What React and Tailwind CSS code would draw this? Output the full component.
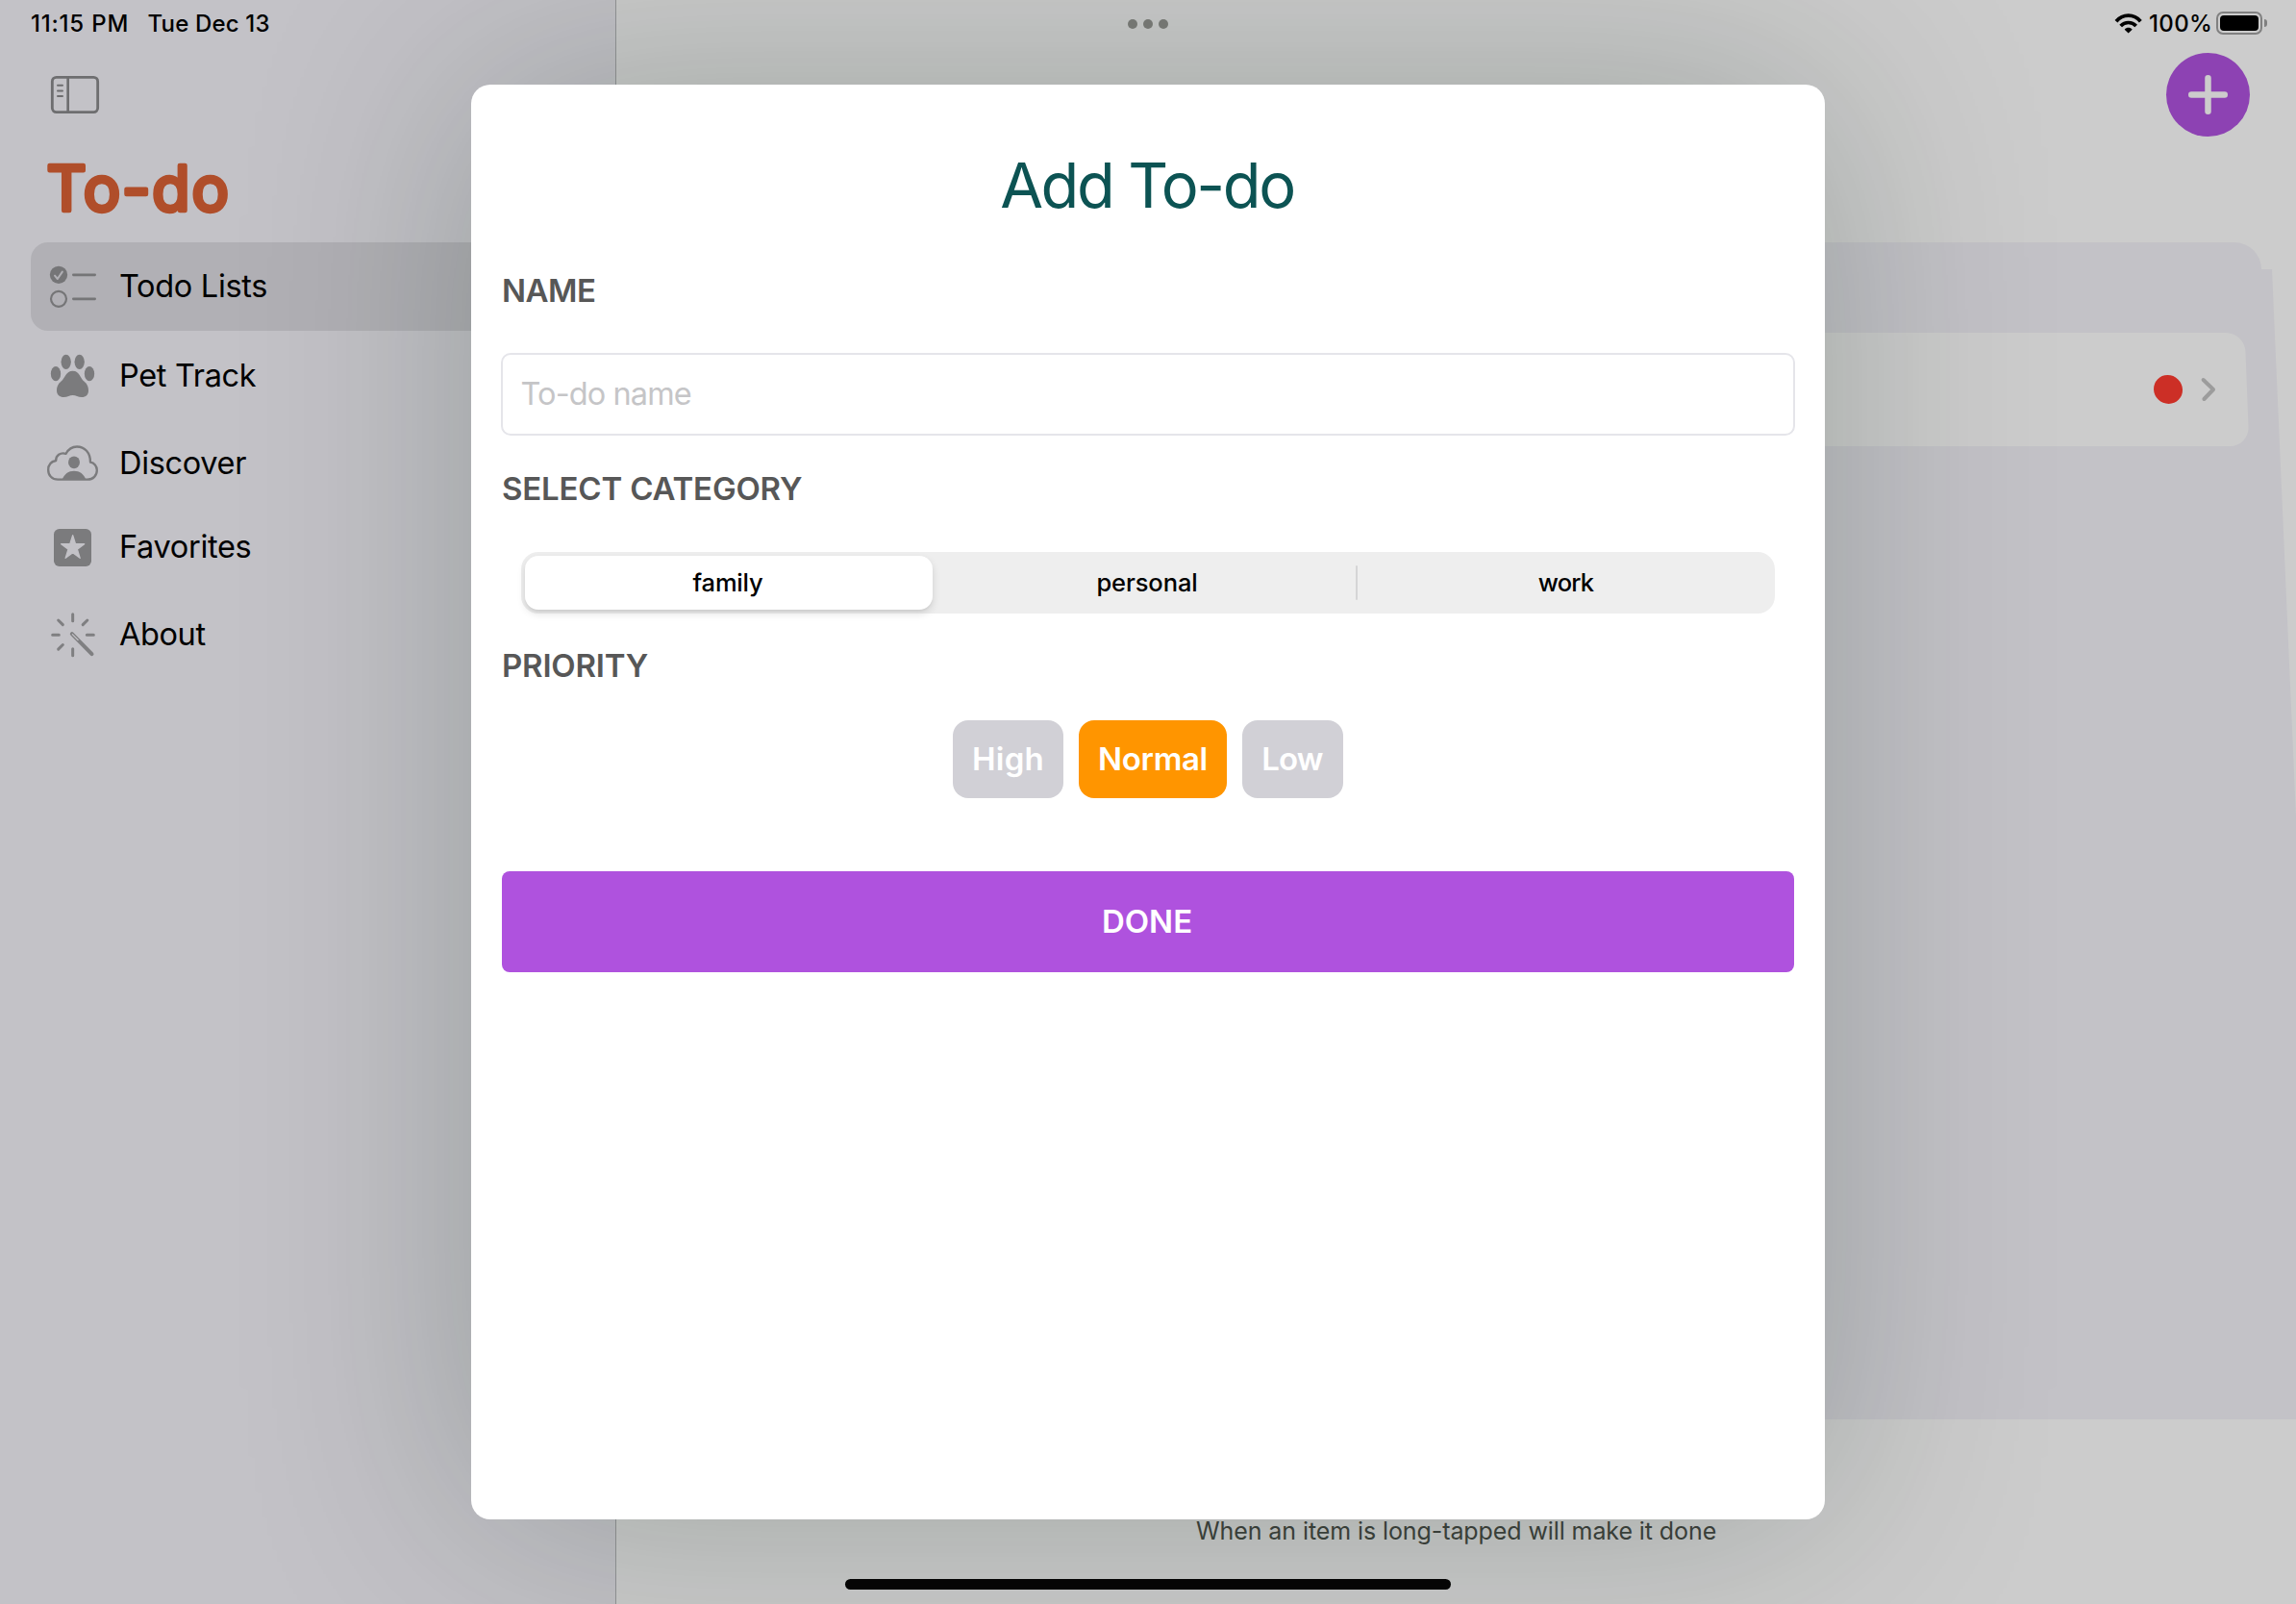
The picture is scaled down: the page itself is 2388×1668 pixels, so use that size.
function SidebarToggleIcon() {
  return (
    <svg viewBox="150 225 170 140" className="h-[46.67px] w-[56.67px]" fill="none" stroke="#6e6e70" strokeLinecap="round">
      <rect x="163" y="241" width="142" height="109" rx="13" strokeWidth="8.500" />
      <path d="M212 241V350" strokeWidth="8" />
      <path d="M180 266.500H195M180 283.500H195M180 300H195" strokeWidth="6" />
    </svg>
  );
}

const iconClass = "size-[60px] shrink-0";

function ChecklistIcon() {
  return (
    <svg viewBox="135 804 180 180" className={iconClass} fill="none" strokeLinecap="round" strokeLinejoin="round">
      <circle cx="183" cy="857.500" r="27.500" fill="#757577" />
      <path d="M171 860L179.500 870L194.500 848" stroke="#b1b0b5" strokeWidth="6" />
      <circle cx="183" cy="932.500" r="24" stroke="#757577" strokeWidth="6.500" />
      <path d="M229 857.500H296M229 932.500H296" stroke="#757577" strokeWidth="8" />
    </svg>
  );
}

function PawIcon() {
  return (
    <svg viewBox="135 63 180 180" className={iconClass} fill="#7b7b7d">
      <ellipse cx="206" cy="109" rx="15.500" ry="23" />
      <ellipse cx="248" cy="109" rx="15.500" ry="23" />
      <ellipse cx="174" cy="146" rx="15.500" ry="23" />
      <ellipse cx="279" cy="146" rx="15.500" ry="23" />
      <path d="M227 137C205 137 205 158 190 170C180 178 177 188 177 198C177 212 186 219 199 219C211 219 217 213 227 213C237 213 243 219 255 219C268 219 276 212 276 198C276 188 273 178 263 170C248 158 249 137 227 137Z" />
    </svg>
  );
}

function CloudPersonIcon() {
  return (
    <svg viewBox="135 336 180 180" className={iconClass} fill="#7b7b7d">
      <path
        d="M181 476C162 476 150.500 463 150.500 446C150.500 431 160 420 174.500 417C174 401 188 390 206 395.500C213 382 225 373.500 240 373.500C264 373.500 282 392 282 422C294 424 302.500 435 302.500 447C302.500 463 291 476 273 476Z"
        fill="none"
        stroke="#7b7b7d"
        strokeWidth="7"
        strokeLinejoin="round"
      />
      <ellipse cx="231" cy="422.500" rx="18" ry="19" />
      <path d="M194 477C200 459 214 449.500 231 449.500S262 459 268 477Z" />
    </svg>
  );
}

function StarSquareIcon() {
  return (
    <svg viewBox="135 597 180 180" className={iconClass}>
      <rect x="168" y="630" width="117" height="117" rx="17" fill="#7b7b7d" />
      <path
        d="M227 650L235.500 677H263L241 693.500L249.500 721L227 704.500L204.500 721L213 693.500L191 677H218.500Z"
        fill="#c3c2c7"
        stroke="#c3c2c7"
        strokeWidth="4"
        strokeLinejoin="round"
      />
    </svg>
  );
}

function WandRaysIcon() {
  return (
    <svg viewBox="135 870 180 180" className={iconClass} fill="none" stroke="#7f7f81" strokeLinecap="round">
      <path
        d="M227 896V917M227 1004V1025M164 960.500H184M271 960.500H292M182 915L196 929M272.500 915L258.500 929M196 991.500L182 1005.500"
        strokeWidth="9"
      />
      <path d="M224.500 957.500L286.500 1020.500" strokeWidth="12" />
      <path d="M226 959L243.500 976.500" stroke="#c3c2c7" strokeWidth="3.500" />
    </svg>
  );
}

function WifiIcon() {
  return (
    <svg viewBox="955 38 90 66" className="h-[22px] w-[30px]" fill="none" stroke="#000">
      <path d="M961 65.500C982 41.500 1016 41.500 1037 65.500" strokeWidth="11.500" />
      <path d="M975 80C988 66 1010 66 1023 80" strokeWidth="11" />
      <path d="M987 91C993 83.500 1005 83.500 1011 91L999 102.500Z" fill="#000" stroke="none" />
    </svg>
  );
}

const navItems = [
  { label: "Todo Lists", icon: ChecklistIcon, row: "h-[92px] rounded-l-[18px] bg-[#b1b0b5]", text: "tracking-[-0.32px]" },
  { label: "Pet Track", icon: PawIcon, row: "h-[94px]", text: "tracking-[-0.34px]" },
  { label: "Discover", icon: CloudPersonIcon, row: "h-[88px]", text: "tracking-[-0.32px]" },
  { label: "Favorites", icon: StarSquareIcon, row: "h-[86px]", text: "tracking-[-0.32px]" },
  { label: "About", icon: WandRaysIcon, row: "h-[96px]", text: "tracking-[-0.4px]" },
];

function Sidebar() {
  return (
    <aside className="h-full w-[641px] shrink-0 border-r border-[#949597] bg-[#c3c2c7] pl-8 pt-[75px]">
      <div className="ml-[18px] h-[47px]">
        <SidebarToggleIcon />
      </div>
      <h1 className="mt-[34px] h-[96px]">
        <svg viewBox="0 0 260 80" className="h-[80px] w-[260px]" role="img" aria-label="To-do">
          <text
            x="16.500"
            y="62.500"
            fill="#b04e2a"
            stroke="#b04e2a"
            strokeWidth="4.500"
            strokeLinejoin="round"
            className="font-[Inter] text-[64px] font-normal tracking-[1.9px]"
          >
            To-do
          </text>
        </svg>
      </h1>
      <nav>
        {navItems.map(({ label, icon: Icon, row, text }) => (
          <div key={label} className={`flex items-center pl-[13px] ${row}`}>
            <Icon />
            <span className={`pl-[19px] text-[32.5px] leading-10 text-black ${text}`}>{label}</span>
          </div>
        ))}
      </nav>
    </aside>
  );
}

function MainPane() {
  return (
    <section className="flex h-full min-w-0 flex-1 flex-col bg-[#cccccc] pt-[55px]">
      <button className="mr-12 flex size-[87px] items-center justify-center self-end rounded-full bg-[#8d42b3]">
        <svg viewBox="0 0 41 41" className="size-[41px]" stroke="#cccccc" strokeWidth="6.500" strokeLinecap="round">
          <path d="M20.500 3.250V37.750M3.250 20.500H37.750" />
        </svg>
      </button>
      <div className="mr-9 mt-[110px] h-7 shrink-0 rounded-tr-[28px] bg-[#c3c2c7]" />
      <div className="h-[1196px] shrink-0 bg-[#c3c2c7] pt-[66px] [clip-path:polygon(0_0,1722px_0,100%_570px,100%_100%,0_100%)]">
        <div className="ml-[50px] mr-[51.5px] flex h-[117.5px] skew-x-[2.2deg] items-center justify-end rounded-[20px] bg-[#cccccc] pr-[32px]">
          <span className="size-[29.5px] rounded-full bg-[#cc2f26]" />
          <svg viewBox="0 0 16 26" className="ml-[19px] h-[26px] w-4" fill="none" stroke="#9c9c9c" strokeWidth="4" strokeLinecap="round" strokeLinejoin="round">
            <path d="M3 3L13 13L3 23" />
          </svg>
        </div>
      </div>
      <p className="ml-[603px] mt-[96px] whitespace-nowrap text-[25px] leading-10 tracking-[-0.09px] text-[#3f433e]">
        When an item is long-tapped will make it done
      </p>
    </section>
  );
}

function StatusBar() {
  return (
    <header className="absolute inset-x-0 top-0 grid h-12 grid-cols-3 items-center text-[24px] font-medium leading-[47px] text-black">
      <div className="flex pl-8">
        <span className="w-[121.5px] tracking-[0.8px]">11:15 PM</span>
        <span className="tracking-[0.17px]">Tue Dec 13</span>
      </div>
      <div className="flex justify-center gap-1.5 pt-0.5">
        <i className="size-2.5 rounded-full bg-[#747672]" />
        <i className="size-2.5 rounded-full bg-[#747672]" />
        <i className="size-2.5 rounded-full bg-[#747672]" />
      </div>
      <div className="flex items-center justify-end pr-[30px]">
        <WifiIcon />
        <span className="ml-[6px] w-[70px] tracking-[0.35px]">100%</span>
        <span className="flex h-6 w-12 items-center justify-center rounded-[7px] border-2 border-[#808080]">
          <span className="h-4 w-10 rounded-[4px] bg-black" />
        </span>
        <span className="ml-0.5 h-2 w-[3px] rounded-r-full bg-[#808080]" />
      </div>
    </header>
  );
}

const labelClass = "text-[33px] font-semibold leading-10 text-[#575757]";

function AddTodoDialog() {
  return (
    <div
      role="dialog"
      className="absolute left-[490px] top-[88px] h-[1492px] w-[1408px] rounded-[20px] bg-white px-8 pt-[65px] shadow-[0_0_240px_0_rgba(10,32,16,0.23)]"
    >
      <h2 className="h-20 pr-0.5 text-center text-[65px] leading-20 tracking-[-2.4px] text-[#0c5353]">Add To-do</h2>

      <div className={`mt-[49px] tracking-[-0.5px] ${labelClass}`}>NAME</div>
      <div className="-ml-px mt-[45px] flex h-[86px] w-[1346px] items-center rounded-[10px] border-2 border-[#e5e5ea] pl-[18.5px]">
        <span className="text-[32.5px] leading-10 tracking-[-0.9px] text-[#c5c5c7]">To-do name</span>
      </div>

      <div className={`mt-[35px] tracking-[-0.18px] ${labelClass}`}>SELECT CATEGORY</div>
      <div className="ml-5 mt-[46px] flex h-16 w-[1304px] items-center rounded-[18px] bg-[#eeeeee] p-1 text-center text-[25.5px] font-medium leading-14 text-black">
        <div className="h-14 w-[424px] rounded-[14px] bg-white pr-0.5 tracking-[-0.2px] shadow-[0_4px_8px_rgba(0,0,0,0.12),0_2px_2px_rgba(0,0,0,0.04)]">
          family
        </div>
        <div className="h-14 flex-1 pl-1.5 tracking-[-0.1px]">personal</div>
        <div className="h-9 w-0.5 rounded-full bg-[#d5d5d6]" />
        <div className="h-14 w-[430px] pl-[3px] tracking-[-0.8px]">work</div>
      </div>

      <div className={`mt-[34px] tracking-[-0.2px] ${labelClass}`}>PRIORITY</div>
      <div className="mt-[37px] flex justify-center gap-4 text-center text-[33px] font-semibold leading-[80px] text-white">
        <span className="h-[81px] w-[115px] rounded-2xl bg-[#d1d0d6] tracking-[0.2px]">High</span>
        <span className="h-[81px] w-[154px] rounded-2xl bg-[#ff9500] tracking-[-0.35px]">Normal</span>
        <span className="h-[81px] w-[105px] rounded-2xl bg-[#d1d0d6] pr-px tracking-[-0.88px]">Low</span>
      </div>

      <button className="mt-[76px] block h-[105px] w-[1344px] rounded-[8px] bg-[#af52de] pr-0.5 text-center text-[33px] font-semibold leading-[103px] text-white">
        DONE
      </button>
    </div>
  );
}

export default function App() {
  return (
    <main className="relative flex h-[1668px] w-[2388px] overflow-hidden font-[Inter,sans-serif]">
      <Sidebar />
      <MainPane />
      <AddTodoDialog />
      <StatusBar />
      <div className="absolute bottom-[15px] left-[879px] h-[11px] w-[630px] rounded-full bg-[#050505]" />
    </main>
  );
}
